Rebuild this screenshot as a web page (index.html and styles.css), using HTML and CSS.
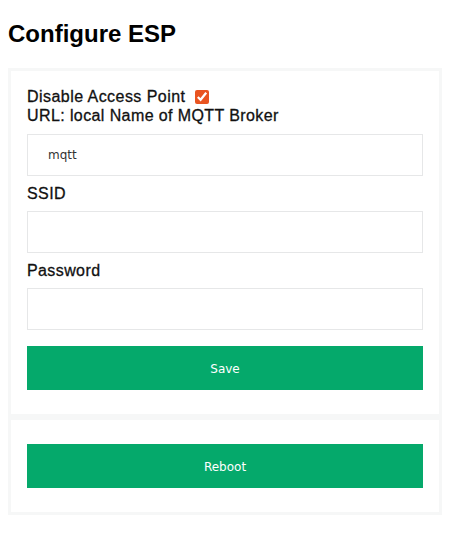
FILE: index.html
```html
<!DOCTYPE html>
<html>
<head>
<meta charset="utf-8">
<link rel="stylesheet" href="styles.css">
</head>
<body>
<h1 class="title">Configure ESP</h1>
<form class="card card-main">
  <div class="check-row">
    <span class="label-text">Disable Access Point</span>
    <input class="check" type="checkbox" checked>
  </div>
  <label class="label first">URL: local Name of MQTT Broker</label>
  <input class="field" type="text" value="mqtt">
  <label class="label">SSID</label>
  <input class="field" type="text">
  <label class="label">Password</label>
  <input class="field" type="password">
  <button class="btn" type="button">Save</button>
</form>
<div class="card card-reboot">
  <button class="btn" type="button">Reboot</button>
</div>
</body>
</html>
```

FILE: styles.css
```css
html, body {
  background: #ffffff;
}
body {
  margin: 8px;
  font-family: "Liberation Sans", Arial, sans-serif;
  color: #111111;
}
.title {
  font-size: 24px;
  font-weight: bold;
  margin: 12px 0 20px 0;
  color: #000;
}
.card {
  border: 3px solid #f6f7f7;
  display: flex;
  flex-direction: column;
}
.card-main {
  margin: 0;
  padding: 16px 16px 24px 16px;
}
.card-reboot {
  padding: 24px 16px;
}
.check-row {
  display: flex;
  align-items: center;
  height: 20px;
  font-size: 16px;
  letter-spacing: 0.45px;
  -webkit-text-stroke: 0.3px #111;
}
.check {
  width: 14px;
  height: 14px;
  margin: 0 0 0 10px;
  accent-color: #e95420;
}
.label {
  display: block;
  font-size: 16px;
  line-height: 18px;
  margin-top: 9px;
  letter-spacing: 0.4px;
  -webkit-text-stroke: 0.3px #111;
}
.label.first {
  margin-top: 0;
}
.field {
  box-sizing: border-box;
  height: 42px;
  width: 100%;
  margin: 8px 0 0 0;
  border: 1px solid #e6e7e8;
  border-radius: 0;
  padding: 0 20px;
  font-family: "DejaVu Sans", sans-serif;
  font-size: 12px;
  color: #333;
  background: #fff;
  outline: none;
}
.label.first + .field {
  margin-top: 9px;
}
.btn {
  height: 44px;
  width: 100%;
  border: none;
  border-radius: 0;
  background: #05a96b;
  color: #ffffff;
  font-family: "DejaVu Sans", sans-serif;
  font-size: 12px;
  margin: 0;
  padding: 2px 0 0 0;
}
.card-main .btn {
  margin-top: 16px;
}
```
